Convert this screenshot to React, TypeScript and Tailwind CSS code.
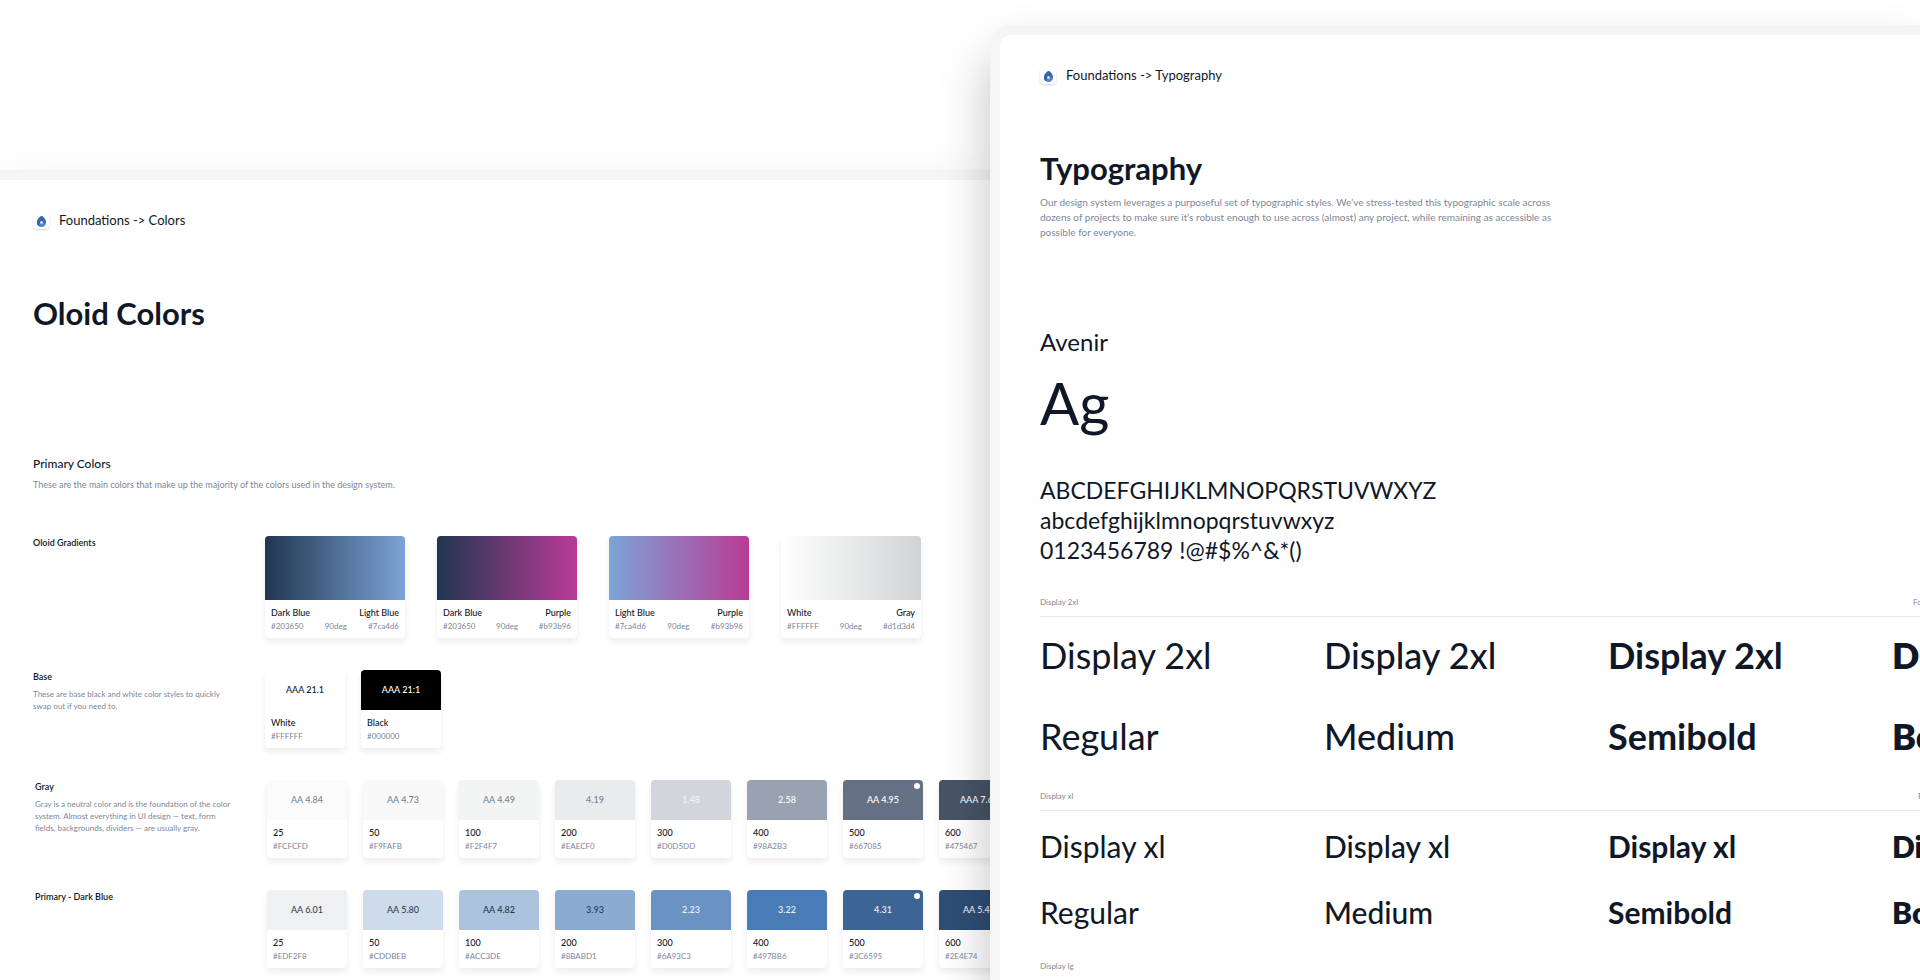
import type { ReactNode } from "react";

type Gradient = {
  from: string;
  fromHex: string;
  to: string;
  toHex: string;
};

type Swatch = {
  name: string;
  hex: string;
  contrast: string;
  // text colour of the contrast label on the swatch
  ink: string;
  fill?: string;
  marked?: boolean;
};

type TypeStyle = {
  label: string;
  spec: string;
  specClass: string;
  rowClass: string;
};

const GRADIENTS: Gradient[] = [
  { from: "Dark Blue", fromHex: "#203650", to: "Light Blue", toHex: "#7ca4d6" },
  { from: "Dark Blue", fromHex: "#203650", to: "Purple", toHex: "#b93b96" },
  { from: "Light Blue", fromHex: "#7ca4d6", to: "Purple", toHex: "#b93b96" },
  { from: "White", fromHex: "#FFFFFF", to: "Gray", toHex: "#d1d3d4" },
];

const BASE: Swatch[] = [
  { name: "White", hex: "#FFFFFF", contrast: "AAA 21.1", ink: "#101828" },
  { name: "Black", hex: "#000000", contrast: "AAA 21:1", ink: "#ffffff" },
];

const GRAY: Swatch[] = [
  { name: "25", hex: "#FCFCFD", contrast: "AA 4.84", ink: "#7d8390", fill: "#fbfbfb" },
  { name: "50", hex: "#F9FAFB", contrast: "AA 4.73", ink: "#7d8390", fill: "#f9f9f9" },
  { name: "100", hex: "#F2F4F7", contrast: "AA 4.49", ink: "#7d8390", fill: "#f3f5f5" },
  { name: "200", hex: "#EAECF0", contrast: "4.19", ink: "#7d8390", fill: "#eaebed" },
  { name: "300", hex: "#D0D5DD", contrast: "1.48", ink: "#f2f4f7", fill: "#d2d6dc" },
  { name: "400", hex: "#98A2B3", contrast: "2.58", ink: "#ffffff" },
  { name: "500", hex: "#667085", contrast: "AA 4.95", ink: "#ffffff", marked: true },
  { name: "600", hex: "#475467", contrast: "AAA 7.65", ink: "#ffffff" },
];

const DARK_BLUE: Swatch[] = [
  { name: "25", hex: "#EDF2F8", contrast: "AA 6.01", ink: "#344054", fill: "#eff0f2" },
  { name: "50", hex: "#CDDBEB", contrast: "AA 5.80", ink: "#344054" },
  { name: "100", hex: "#ACC3DE", contrast: "AA 4.82", ink: "#203650" },
  { name: "200", hex: "#8BABD1", contrast: "3.93", ink: "#203f68" },
  { name: "300", hex: "#6A93C3", contrast: "2.23", ink: "#eaf0f8" },
  { name: "400", hex: "#497BB6", contrast: "3.22", ink: "#eaf0f8" },
  { name: "500", hex: "#3C6595", contrast: "4.31", ink: "#eaf0f8", marked: true },
  { name: "600", hex: "#2E4E74", contrast: "AA 5.42", ink: "#eaf0f8" },
];

const TYPE_STYLES: TypeStyle[] = [
  {
    label: "Display 2xl",
    spec: "Font size: 72px / 4.5rem | Line height: 90px / 5.625rem | Tracking: -2%",
    specClass: "w-[263px]",
    rowClass: "gap-y-9 pt-4 pb-[31px] text-4xl leading-[45px]",
  },
  {
    label: "Display xl",
    spec: "Font size: 60px / 3.75rem | Line height: 72px / 4.5rem | Tracking: -2%",
    specClass: "w-[258px]",
    rowClass: "gap-y-[30px] pt-[17px] pb-[30px] text-3xl leading-9",
  },
  {
    label: "Display lg",
    spec: "Font size: 48px / 3rem | Line height: 60px / 3.75rem | Tracking: -2%",
    specClass: "w-[252px]",
    rowClass: "gap-y-6 pt-4 pb-6 text-2xl leading-8",
  },
];

const WEIGHTS = [
  { name: "Regular", className: "font-normal" },
  { name: "Medium", className: "font-medium" },
  { name: "Semibold", className: "font-bold" },
  { name: "Bold", className: "font-extrabold" },
];

function Logo() {
  return (
    <span className="flex size-4 items-center justify-center rounded-sm bg-white shadow-[0_1px_2px_rgba(16,24,40,0.18)]">
      <svg aria-hidden="true" className="h-[11px] w-[9px]" viewBox="0 0 18 22">
        <path d="M9 0C13 1 18 8 18 13.500A9 8.500 0 0 1 0 13.500C0 8 5 1 9 0Z" fill="#5484c2" />
        <path d="M9 0C13 1 18 8 18 13L12 13C12 9 6 9 6 13L5 20C-3 17 -1 10 3 5C5 2 7 1 9 0Z" fill="#3767a6" />
        <circle cx="9" cy="13" fill="#fff" r="2.400" />
      </svg>
    </span>
  );
}

function Breadcrumb({ page }: { page: string }) {
  return (
    <nav className="flex h-[18px] items-center gap-2.5 text-[13px]">
      <Logo />
      <span className="whitespace-nowrap">Foundations -&gt; {page}</span>
    </nav>
  );
}

function ColorRow({
  title,
  text,
  className = "",
  children,
}: {
  title: string;
  text?: string;
  className?: string;
  children: ReactNode;
}) {
  return (
    <div className={`flex ${className}`}>
      <div className="w-[232px] shrink-0 pr-8">
        <h3 className="text-[9px] leading-[14px] font-semibold">{title}</h3>
        {text ? <p className="mt-1 text-[8px] leading-3 text-[#7d8699]">{text}</p> : null}
      </div>
      {children}
    </div>
  );
}

function GradientCard({ gradient }: { gradient: Gradient }) {
  return (
    <div className="w-[140px] shrink-0 overflow-hidden rounded bg-white shadow-[0_4px_6px_rgba(16,24,40,0.08)]">
      <div
        className="h-16"
        style={{ background: `linear-gradient(90deg, ${gradient.fromHex}, ${gradient.toHex})` }}
      />
      <div className="px-1.5 pt-1.5 pb-[5px]">
        <div className="flex justify-between text-[9px] leading-[14px] font-medium">
          <span>{gradient.from}</span>
          <span>{gradient.to}</span>
        </div>
        <div className="flex justify-between text-[8px] leading-[13px] text-[#7d8699]">
          <span>{gradient.fromHex}</span>
          <span>90deg</span>
          <span>{gradient.toHex}</span>
        </div>
      </div>
    </div>
  );
}

function SwatchCard({ swatch }: { swatch: Swatch }) {
  return (
    <div className="w-20 shrink-0 overflow-hidden rounded bg-white shadow-[0_4px_6px_rgba(16,24,40,0.08)]">
      <div
        className="relative flex h-10 items-center justify-center text-[9px] font-medium"
        style={{ backgroundColor: swatch.fill ?? swatch.hex, color: swatch.ink }}
      >
        {swatch.contrast}
        {swatch.marked ? (
          <span className="absolute top-[3px] right-[3px] size-1.5 rounded-full bg-white" />
        ) : null}
      </div>
      <div className="px-1.5 pt-1.5 pb-[5px]">
        <p className="text-[9px] leading-[14px] font-medium">{swatch.name}</p>
        <p className="text-[8px] leading-[13px] text-[#7d8699]">{swatch.hex}</p>
      </div>
    </div>
  );
}

function SwatchList({ swatches }: { swatches: Swatch[] }) {
  return (
    <div className="flex gap-4">
      {swatches.map((swatch) => (
        <SwatchCard key={swatch.name} swatch={swatch} />
      ))}
    </div>
  );
}

function ColorsBoard() {
  return (
    <section className="mt-[170px] overflow-hidden border-t-10 border-[#f4f6f6] bg-white pt-8 pl-[33px] shadow-[0_0_40px_rgba(0,0,0,0.04)]">
      <Breadcrumb page="Colors" />
      <h1 className="mt-16 text-[31px] leading-[38px] font-bold">Oloid Colors</h1>
      <h2 className="mt-[123px] text-xs leading-[18px] font-medium">Primary Colors</h2>
      <p className="mt-[5px] text-[9px] leading-[14px] text-[#7d8699]">
        These are the main colors that make up the majority of the colors used in the design system.
      </p>
      <div className="mt-11 flex flex-col gap-8">
        <ColorRow title="Oloid Gradients">
          <div className="flex gap-8">
            {GRADIENTS.map((gradient) => (
              <GradientCard key={gradient.from + gradient.to} gradient={gradient} />
            ))}
          </div>
        </ColorRow>
        <ColorRow
          text="These are base black and white color styles to quickly swap out if you need to."
          title="Base"
        >
          <SwatchList swatches={BASE} />
        </ColorRow>
        <ColorRow
          className="pl-0.5"
          text="Gray is a neutral color and is the foundation of the color system. Almost everything in UI design — text, form fields, backgrounds, dividers — are usually gray."
          title="Gray"
        >
          <SwatchList swatches={GRAY} />
        </ColorRow>
        <ColorRow className="pl-0.5" title="Primary - Dark Blue">
          <SwatchList swatches={DARK_BLUE} />
        </ColorRow>
      </div>
    </section>
  );
}

function TypeSample({ style }: { style: TypeStyle }) {
  return (
    <div className="w-[1136px]">
      <div className="flex justify-between border-b border-[#e8e9eb] pb-2 text-[8px] leading-3 text-[#7d8699]">
        <span>{style.label}</span>
        <span className={`whitespace-nowrap ${style.specClass}`}>{style.spec}</span>
      </div>
      <div className={`grid grid-cols-4 ${style.rowClass}`}>
        {WEIGHTS.map((weight) => (
          <span key={weight.name} className={weight.className}>
            {style.label}
          </span>
        ))}
        {WEIGHTS.map((weight) => (
          <span key={weight.name} className={weight.className}>
            {weight.name}
          </span>
        ))}
      </div>
    </div>
  );
}

function TypographyBoard() {
  return (
    <section className="relative mt-[25px] overflow-hidden rounded-tl-[20px] border-t-10 border-l-10 border-[#f4f6f6] bg-white pt-8 pl-10 shadow-[0_30px_50px_rgba(0,0,0,0.25)]">
      <Breadcrumb page="Typography" />
      <h1 className="mt-16 text-[31px] leading-[38px] font-bold">Typography</h1>
      <p className="mt-2 w-[520px] text-[10px] leading-[15px] text-[#7d8699]">
        Our design system leverages a purposeful set of typographic styles. We’ve stress-tested
        this typographic scale across dozens of projects to make sure it’s robust enough to use
        across (almost) any project, while remaining as accessible as possible for everyone.
      </p>
      <p className="mt-[87px] text-2xl leading-[30px]">Avenir</p>
      <p className="mt-3 text-[58px] leading-[68px]">Ag</p>
      <p className="mt-[38px] text-[23px] leading-[30px]">
        ABCDEFGHIJKLMNOPQRSTUVWXYZ
        <br />
        abcdefghijklmnopqrstuvwxyz
        <br />
        0123456789 !@#$%^&amp;*()
      </p>
      <div className="mt-[31px]">
        {TYPE_STYLES.map((style) => (
          <TypeSample key={style.label} style={style} />
        ))}
      </div>
    </section>
  );
}

export default function App() {
  return (
    <main className="grid h-screen grid-cols-[minmax(0,33fr)_minmax(0,31fr)] overflow-hidden bg-white font-[Lato,sans-serif] text-[#101828]">
      <ColorsBoard />
      <TypographyBoard />
    </main>
  );
}
